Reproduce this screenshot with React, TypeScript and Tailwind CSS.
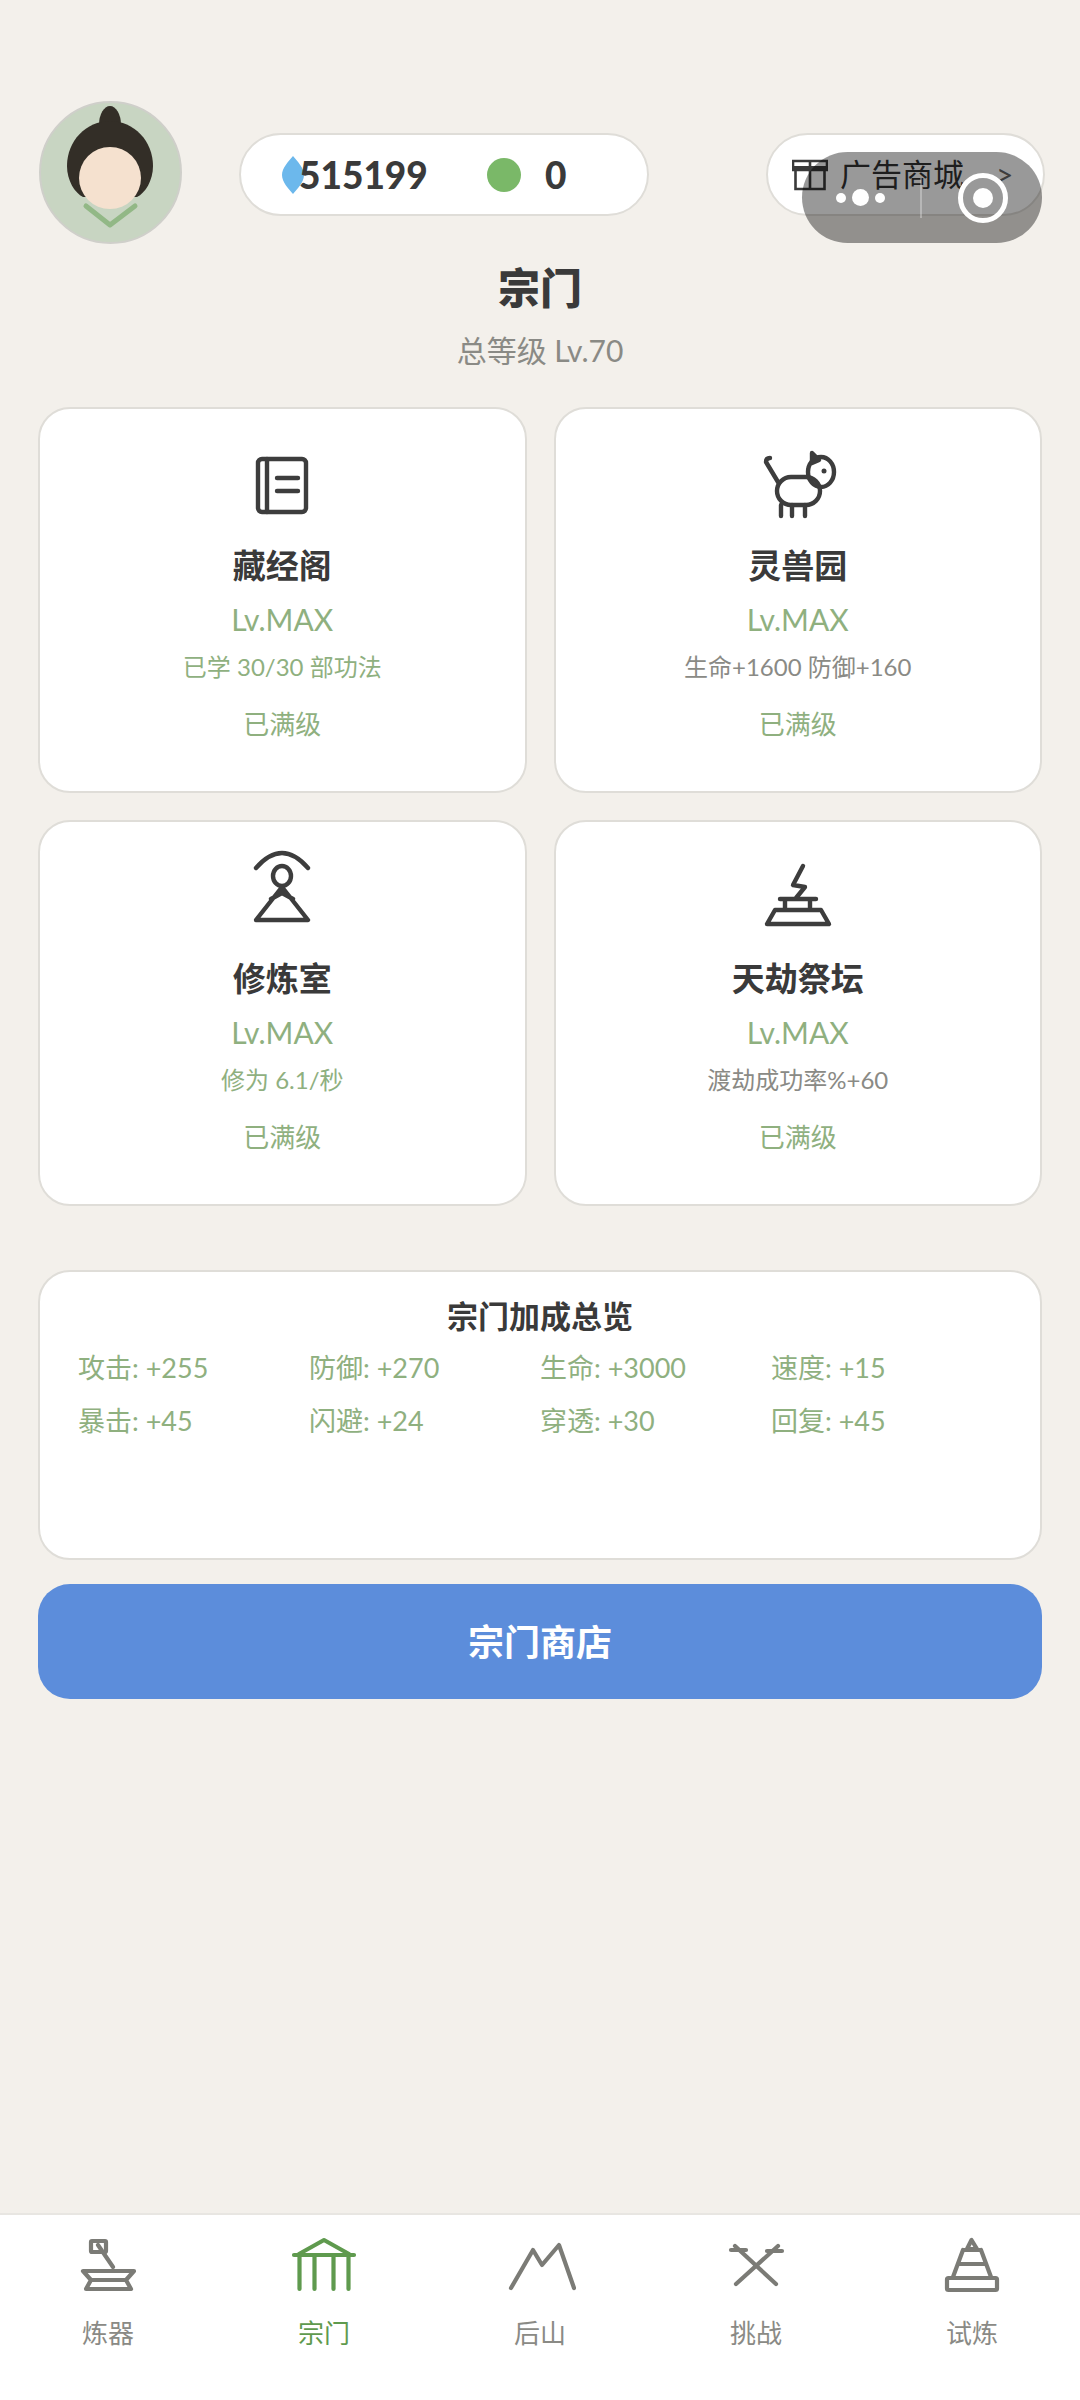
import React from "react";

const FONT = "font-['Lato','Noto_Sans_CJK_SC',sans-serif]";

const halls = [
  { name: "藏经阁", desc: "已学 30/30 部功法", descColor: "text-[#8fb07f]", icon: "book" },
  { name: "灵兽园", desc: "生命+1600 防御+160", descColor: "text-[#8a8a85]", icon: "cat" },
  { name: "修炼室", desc: "修为 6.1/秒", descColor: "text-[#8fb07f]", icon: "room" },
  { name: "天劫祭坛", desc: "渡劫成功率%+60", descColor: "text-[#8a8a85]", icon: "altar" },
];

const stats = [
  "攻击: +255", "防御: +270", "生命: +3000", "速度: +15",
  "暴击: +45", "闪避: +24", "穿透: +30", "回复: +45",
];

function HallIcon({ name }: { name: string }) {
  return (
    <svg
      viewBox="0 0 72 72"
      className="w-[72px] h-[72px] overflow-visible"
      fill="none"
      stroke="#3d3d3d"
      strokeWidth="4.4"
      strokeLinecap="round"
      strokeLinejoin="round"
    >
      {name === "book" && (
        <>
          <rect x="12" y="10" width="48" height="53" rx="4" />
          <path d="M21 10v53M31 29h21M31 42h21" />
        </>
      )}
      {name === "cat" && (
        <>
          <ellipse cx="59" cy="23" rx="13" ry="15" />
          <rect x="15" y="28" width="43" height="28" rx="14" />
          <path d="M16 33 4 13q0-4 4-4M19 56v11M30 56v11M43 56v11" />
          <path d="M50 4l7 7-7 3z" fill="#3d3d3d" />
          <circle cx="62" cy="22" r="2.5" fill="#3d3d3d" stroke="none" />
        </>
      )}
      {name === "room" && (
        <>
          <path d="M10 6Q36-24 62 6" />
          <ellipse cx="36" cy="14" rx="9" ry="10" />
          <path d="M36 25 62 58H10zM25 37 36 31 47 37" />
        </>
      )}
      {name === "altar" && (
        <>
          <path d="M41 4 31 23l12 2-9 11M18 37h36M23 37v11M48 37v11M13 48h46l8 14H5z" />
        </>
      )}
    </svg>
  );
}

function NavIcon({ name, color }: { name: string; color: string }) {
  return (
    <svg
      viewBox="0 0 72 72"
      className="w-[72px] h-[72px]"
      fill="none"
      stroke={color}
      strokeWidth="4.2"
      strokeLinecap="round"
      strokeLinejoin="round"
    >
      {name === "forge" && (
        <>
          <rect x="19" y="12" width="15" height="11" rx="1" />
          <path d="M26 16l15 22M11 42h51l-8 9H19zM19 51h35l5 9H14z" />
        </>
      )}
      {name === "temple" && (
        <>
          <path d="M11 25 36 11l25 14M6 26h60M11.500 26v34M26.500 26v34M45.500 26v34M60.500 26v34" />
        </>
      )}
      {name === "hill" && <path d="M7 59 29 21l9 15L55 16l15 43" />}
      {name === "duel" && <path d="M16 55 58 17M56 55 15 17M11 21h15M47 22h15" />}
      {name === "tower" && (
        <>
          <path d="M35.500 11 31 20h10zM27 21h18M27 21 17 48M45 21l10 27M22 35h28" />
          <rect x="11" y="49" width="50" height="12" rx="1.500" />
        </>
      )}
    </svg>
  );
}

const navItems = [
  { label: "炼器", icon: "forge" },
  { label: "宗门", icon: "temple", active: true },
  { label: "后山", icon: "hill" },
  { label: "挑战", icon: "duel" },
  { label: "试炼", icon: "tower" },
];

function App() {
  return (
    <div className={`${FONT} relative flex flex-col w-[1080px] h-[2400px] bg-[#f3f0eb] text-[#3a3a3a]`}>
      <div className="flex items-start pt-[101px] pl-[39px] pr-[35px]">
        <svg viewBox="0 0 143 143" className="w-[143px] h-[143px] shrink-0">
          <circle cx="71.500" cy="71.500" r="70.500" fill="#c8d5c2" stroke="#cfcfca" strokeWidth="2" />
          <ellipse cx="71" cy="24" rx="11" ry="19" fill="#332e27" />
          <path d="M71 20c24 0 43 20 43 45 0 15-8 27-16 31H44c-8-4-16-16-16-31 0-25 19-45 43-45z" fill="#332e27" />
          <circle cx="71" cy="77" r="31" fill="#f5e1cf" />
          <path d="M47 105l24 19 25-19" fill="none" stroke="#92b886" strokeWidth="5" strokeLinecap="round" strokeLinejoin="round" />
        </svg>
        <div className="flex items-center w-[410px] h-[83px] mt-[32px] ml-[57px] rounded-full bg-white border-2 border-[#dfddd8]">
          <svg viewBox="0 0 22 38" className="w-[22px] h-[38px] ml-[41px] shrink-0">
            <path d="M11 0C16 6 22 12 22 19S16 32 11 38C6 32 0 26 0 19S6 6 11 0z" fill="#6cb8ec" />
          </svg>
          <span className="text-[37px] font-black ml-[-5px] w-[131px]">515199</span>
          <span className="w-[34px] h-[34px] rounded-full bg-[#7ab868] ml-[57px] shrink-0"></span>
          <span className="text-[37px] font-black ml-[24px]">0</span>
        </div>
        <div className="flex items-center w-[279px] h-[83px] mt-[32px] ml-auto rounded-full bg-white border-2 border-[#dfddd8] text-[#333]">
          <svg viewBox="0 0 36 32" className="w-[36px] h-[32px] ml-[24px] shrink-0" fill="none" stroke="#3a3a3a" strokeWidth="2.600">
            <path d="M1 2h34v9H1zM3.500 11v19h29V11M18 2v28" />
            <path d="M1 9h34" strokeWidth="4" />
          </svg>
          <span className="text-[31px] ml-[12px]">广告商城</span>
          <span className="text-[30px] text-[#666] ml-[32px]">&gt;</span>
        </div>
      </div>

      <div className="flex flex-col items-center">
        <h1 className="text-[42px] font-black leading-[60px] mt-[14px]">宗门</h1>
        <p className="text-[30px] leading-[44px] text-[#8a8a85] mt-[10px]">总等级 Lv.70</p>
      </div>

      <div className="grid grid-cols-2 gap-x-[27px] gap-y-[27px] mx-[38px] mt-[35px]">
        {halls.map((hall) => (
          <div key={hall.name} className="flex flex-col items-center h-[386px] pt-[40px] bg-white border-2 border-[#dfddd8] rounded-[32px]">
            <HallIcon name={hall.icon} />
            <div className="text-[33px] font-bold leading-[46px] mt-[21px]">{hall.name}</div>
            <div className="text-[30px] leading-[44px] text-[#8fb07f] mt-[9px]">Lv.MAX</div>
            <div className={`text-[24px] leading-[34px] mt-[9px] ${hall.descColor}`}>{hall.desc}</div>
            <div className="text-[26px] leading-[38px] text-[#8fb07f] mt-[21px]">已满级</div>
          </div>
        ))}
      </div>

      <div className="h-[290px] mx-[38px] mt-[64px] px-[38px] pt-[23px] bg-white border-2 border-[#dfddd8] rounded-[32px]">
        <div className="text-[31px] font-bold leading-[42px] text-center">宗门加成总览</div>
        <div className="grid grid-cols-4 gap-y-[16px] mt-[12px]">
          {stats.map((stat) => (
            <div key={stat} className="text-[27px] leading-[37px] text-[#8fb07f]">{stat}</div>
          ))}
        </div>
      </div>

      <button className="flex items-center justify-center h-[115px] mx-[38px] mt-[24px] rounded-[32px] bg-[#5c8ddb] text-white text-[36px] font-bold">
        宗门商店
      </button>

      <nav className="mt-auto flex h-[187px] pt-[14px] bg-white border-t-2 border-[#e8e6e2]">
        {navItems.map((item) => (
          <div key={item.label} className="flex-1 flex flex-col items-center">
            <NavIcon name={item.icon} color={item.active ? "#5f9a4e" : "#7b7b76"} />
            <span className={`text-[26px] leading-[38px] mt-[13px] ${item.active ? "text-[#5f9a4e]" : "text-[#8a8a85]"}`}>{item.label}</span>
          </div>
        ))}
      </nav>

      <div className="absolute left-[802px] top-[152px] flex items-center w-[240px] h-[91px] rounded-full bg-black/40">
        <span className="w-[10px] h-[10px] rounded-full bg-white ml-[34px]"></span>
        <span className="w-[17px] h-[17px] rounded-full bg-white ml-[6px]"></span>
        <span className="w-[10px] h-[10px] rounded-full bg-white ml-[6px]"></span>
        <span className="w-[2px] h-[40px] bg-white/30 ml-[35px]"></span>
        <span className="flex items-center justify-center w-[50px] h-[50px] rounded-full border-[5px] border-white ml-[36px]">
          <span className="w-[20px] h-[20px] rounded-full bg-white"></span>
        </span>
      </div>
    </div>
  );
}

export default App;
